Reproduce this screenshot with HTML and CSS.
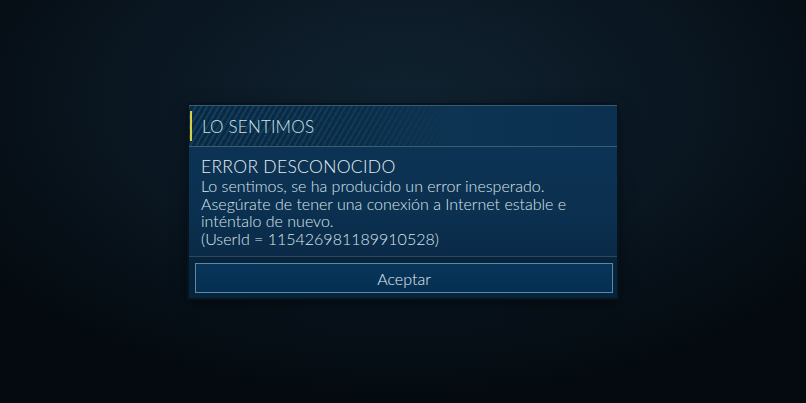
FILE: index.html
```html
<!DOCTYPE html>
<html lang="es">
<head>
    <meta charset="UTF-8">
    <meta name="viewport" content="width=device-width, initial-scale=1.0">
    <title>Error</title>
    <link rel="stylesheet" href="styles.css">
</head>
<body>
    <div class="dialog">
        <div class="dialog-header">
            <span class="accent"></span>
            <h1>LO SENTIMOS</h1>
        </div>

        <div class="dialog-body">
            <h2>ERROR DESCONOCIDO</h2>
            <p>Lo sentimos, se ha producido un error inesperado.<br>
            Asegúrate de tener una conexión a Internet estable e<br>
            inténtalo de nuevo.<br>
            (UserId = 115426981189910528)</p>
        </div>

        <div class="dialog-footer">
            <button class="button">Aceptar</button>
        </div>
    </div>
</body>
</html>
```

FILE: styles.css
```css
/* General Styles */
body {
    margin: 0;
    height: 100vh;
    display: flex;
    justify-content: center;
    align-items: center;
    font-family: 'Lato', sans-serif;
    background: radial-gradient(ellipse 65% 75% at 50% 25%, #102230 0%, #0a1722 50%, #040a0f 100%);
    overflow: hidden;
}

/* Dialog */
.dialog {
    width: 428px;
    background-color: #0a2a43;
    box-shadow: 0 0 0 2px #061420, 0 4px 14px rgba(0, 0, 0, 0.6);
}

.dialog-header {
    display: flex;
    align-items: center;
    height: 40px;
    border-top: 1px solid #3a5a72;
    border-bottom: 1px solid #3c5d75;
    background:
        linear-gradient(to right, rgba(12, 48, 76, 0.1) 0%, rgba(12, 48, 76, 0.4) 35%, #0d3452 62%, #0b3050 100%),
        repeating-linear-gradient(120deg, #153f60 0, #153f60 2px, #09293f 2px, #09293f 5px);
}

.accent {
    width: 2px;
    height: 30px;
    margin-left: 1px;
    background-color: #d4cf45;
}

.dialog-header h1 {
    margin: 0 0 0 10px;
    font-size: 17px;
    font-weight: 300;
    color: #cde3f0;
    letter-spacing: 0.2px;
}

.dialog-body {
    height: 110px;
    padding: 10px 12px 0;
    box-sizing: border-box;
    border-bottom: 1px solid #2a4a62;
    background: linear-gradient(to bottom, #0d3354 0%, #0b3050 60%, #0a2a47 100%);
    color: #e6edf2;
}

.dialog-body h2 {
    margin: 0;
    font-size: 17.5px;
    font-weight: 300;
    line-height: 20px;
    letter-spacing: 0.3px;
}

.dialog-body p {
    margin: 0;
    font-size: 16px;
    font-weight: 300;
    line-height: 17.5px;
    color: #dbe5ec;
}

/* Footer */
.dialog-footer {
    padding: 6px 4px 5px 6px;
    background-color: #08243b;
}

.button {
    display: block;
    width: 100%;
    height: 30px;
    border: 1px solid #5c88a9;
    background: linear-gradient(to bottom, #073559, #052f52);
    color: #e8eef3;
    font-family: 'Lato', sans-serif;
    font-size: 16px;
    font-weight: 300;
    cursor: pointer;
}
```
